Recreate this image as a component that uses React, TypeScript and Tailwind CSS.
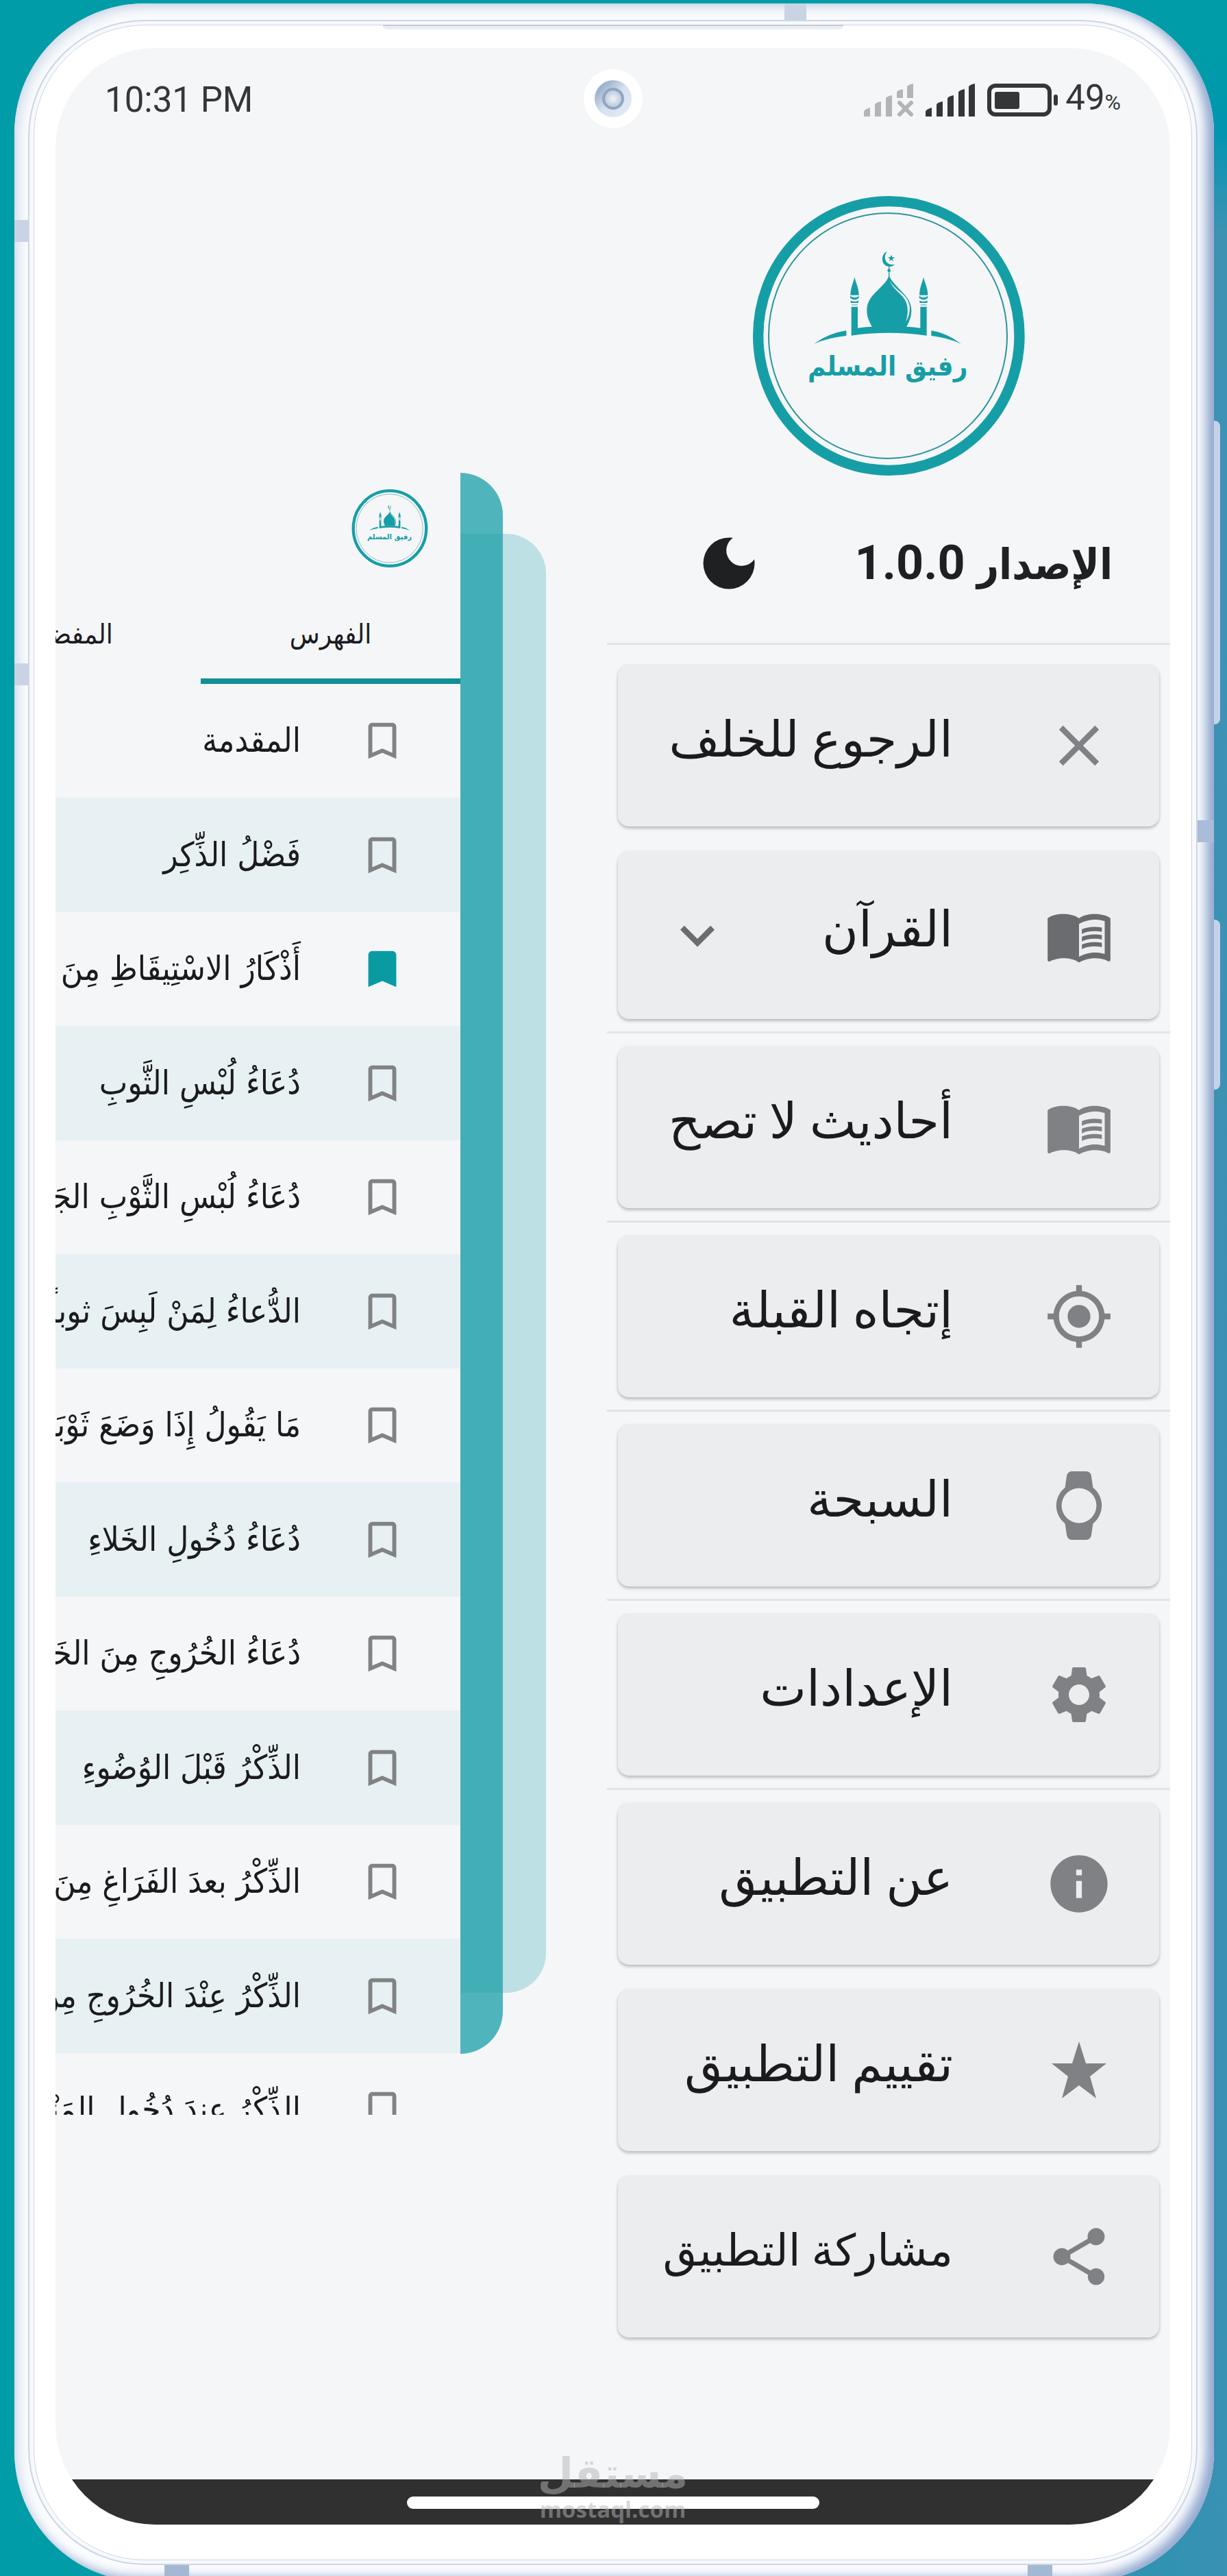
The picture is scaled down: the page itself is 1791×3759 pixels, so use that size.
import { useState } from "react";
import type { ComponentType } from "react";
import {
  MdBookmark,
  MdBookmarkBorder,
  MdClose,
  MdDarkMode,
  MdExpandMore,
  MdInfo,
  MdMenuBook,
  MdMyLocation,
  MdSettings,
  MdShare,
} from "react-icons/md";

type IconProps = { className?: string };

type MenuItem = {
  label: string;
  icon: ComponentType<IconProps>;
  divider?: boolean;
  expandable?: boolean;
  long?: boolean;
};

const MENU: MenuItem[] = [
  { label: "الرجوع للخلف", icon: MdClose },
  { label: "القرآن", icon: MdMenuBook, expandable: true, divider: true },
  { label: "أحاديث لا تصح", icon: MdMenuBook, divider: true },
  { label: "إتجاه القبلة", icon: MdMyLocation, divider: true },
  { label: "السبحة", icon: WatchIcon, divider: true },
  { label: "الإعدادات", icon: MdSettings, divider: true },
  { label: "عن التطبيق", icon: MdInfo },
  { label: "تقييم التطبيق", icon: StarIcon },
  { label: "مشاركة التطبيق", icon: MdShare, long: true },
];

const CHAPTERS = [
  "المقدمة",
  "فَضْلُ الذِّكِر",
  "أَذْكَارُ الاسْتِيقَاظِ مِنَ",
  "دُعَاءُ لُبْسِ الثَّوبِ",
  "دُعَاءُ لُبْسِ الثَّوْبِ الجَدِيدِ",
  "الدُّعاءُ لِمَنْ لَبِسَ ثوباً جديداً",
  "مَا يَقُولُ إِذَا وَضَعَ ثَوْبَهُ",
  "دُعَاءُ دُخُولِ الخَلاءِ",
  "دُعَاءُ الخُرُوجِ مِنَ الخَلاءِ",
  "الذِّكْرُ قَبْلَ الوُضُوءِ",
  "الذِّكْرُ بعدَ الفَرَاغِ مِنَ الوُضُوءِ",
  "الذِّكْرُ عِنْدَ الخُرُوجِ مِنَ المَنْزِلِ",
  "الذِّكْرُ عِندَ دُخُولِ المَنْزِلِ",
];

function WatchIcon({ className }: IconProps) {
  return (
    <svg viewBox="0 0 24 24" className={className} fill="currentColor" aria-hidden="true">
      <path
        fillRule="evenodd"
        d="M16.9 5.7 16.3 1.6Q16 0 14.5 0h-5Q8 0 7.7 1.6L7.1 5.7A8 8 0 0 0 7.1 18.3l.6 4.1Q8 24 9.5 24h5q1.5 0 1.8-1.6l.6-4.1A8 8 0 0 0 16.9 5.7ZM12 18.1a6.1 6.1 0 1 1 0-12.2 6.1 6.1 0 0 1 0 12.2Z"
      />
    </svg>
  );
}

function StarIcon({ className }: IconProps) {
  return (
    <svg viewBox="0 0 100 100" className={className} fill="currentColor" aria-hidden="true">
      <path d="M50 8 60 40H90L66 59 75 91 50 72 25 91 34 59 10 40H40Z" />
    </svg>
  );
}

function Minaret() {
  return (
    <g>
      <path d="M0 433C5 458 18 478 19 512H-18C-17 478-5 458 0 433Z" />
      <path d="M-19 516Q0 530 19 516V524Q0 540-19 524Z" />
      <path d="M-17 536Q0 544 17 536V546H-17Z" />
      <path d="M-13 552H14V557H-13Z" opacity="0.5" />
    </g>
  );
}

function Logo({ className }: IconProps) {
  return (
    <svg viewBox="118 78 1191 1224" className={className} fill="#169ea6" role="img" aria-label="رفيق المسلم">
      <ellipse cx="713" cy="690" rx="572" ry="589" fill="none" stroke="#169ea6" strokeWidth="46" />
      <ellipse cx="709" cy="690" rx="522" ry="537" fill="none" stroke="#2b959b" strokeWidth="6" />
      {/* crescent and star */}
      <path d="M706 321C677 330 676 384 714 387Q730 387 739 377C702 386 684 348 706 321Z" />
      <path d="M724 335 728 346 739 346 730 353 733 364 724 357 715 364 718 353 709 346 720 346Z" />
      <path d="M712 383H716V432H712Z" />
      <circle cx="714" cy="404" r="7" />
      {/* dome */}
      <path d="M714 426C698 480 617 506 617 578C617 612 630 630 640 652H790C800 630 812 612 812 578C812 512 738 482 714 426Z" />
      <path
        d="M717 450C734 494 788 512 794 562C798 592 793 610 788 628C802 606 807 582 804 560C797 508 742 492 717 450Z"
        fill="#f5f6f8"
      />
      <g transform="translate(563 0)">
        <Minaret />
      </g>
      <g transform="translate(865 0)">
        <Minaret />
      </g>
      <path d="M549 563H577V656Q604 652 640 650H790Q824 652 851 656V563H879V689Q713 665 549 689Z" />
      <path d="M385 725Q452 678 527 667V690Q450 698 385 725Z" />
      <path d="M1030 725Q966 678 899 667V690Q968 698 1030 725Z" />
      <text
        x="708"
        y="864"
        textAnchor="middle"
        direction="rtl"
        className="font-['DejaVu_Sans_Condensed','DejaVu_Sans',sans-serif] text-[120px] font-bold"
      >
        رفيق المسلم
      </text>
    </svg>
  );
}

function Signal({ off }: { off?: boolean }) {
  return (
    <svg
      viewBox="0 0 72 48"
      className={off ? "h-12 w-[72px] text-[#b4b4b5]" : "h-12 w-[72px] text-[#353637]"}
      fill="currentColor"
      aria-hidden="true"
    >
      <path d="M0 48V41Q0 38 9 35V48ZM16 48V31Q16 28 25 26V48ZM32 48V22Q32 19 41 17V48Z" />
      {off ? (
        <>
          <path d="M48 21V13Q48 10 57 8V21ZM63 21V5Q63 2 72 0V21Z" />
          <path d="M52 28 69 45M69 28 52 45" stroke="currentColor" strokeWidth="6" strokeLinecap="round" />
        </>
      ) : (
        <path d="M48 48V13Q48 10 57 8V48ZM63 48V5Q63 2 72 0V48Z" />
      )}
    </svg>
  );
}

function Battery() {
  return (
    <svg viewBox="0 0 104 48" className="h-12 w-[104px] text-[#353637]" fill="currentColor" aria-hidden="true">
      <rect x="3" y="3" width="88" height="42" rx="9" fill="none" stroke="currentColor" strokeWidth="6" />
      <rect x="11" y="12" width="36" height="25" rx="3" />
      <rect x="97" y="16" width="6" height="16" rx="3" />
    </svg>
  );
}

function StatusBar() {
  return (
    <header className="grid h-[148px] grid-cols-[1fr_auto_1fr] items-center px-[72px] text-[#353637]">
      <time className="pt-1 text-[51px] leading-[60px]">10:31 PM</time>
      <div className="grid size-[86px] place-items-center rounded-full bg-white">
        <div className="grid size-[54px] place-items-center rounded-full bg-linear-to-br from-[#7f97b8] via-[#d5e1ee] to-[#e4edf6]">
          <div className="size-8 rounded-full border-4 border-[#8fa5c3] bg-radial from-[#f1f4f9] to-[#a9bad2]" />
        </div>
      </div>
      <div className="flex items-center justify-end gap-[18px] pt-1">
        <Signal off />
        <Signal />
        <Battery />
        <p className="-ml-2 text-[51px] leading-[60px]">
          49<span className="text-[32px]">%</span>
        </p>
      </div>
    </header>
  );
}

function ChapterPanel() {
  const [saved, setSaved] = useState<number[]>([2]);
  const toggle = (i: number) => setSaved((s) => (s.includes(i) ? s.filter((n) => n !== i) : [...s, i]));

  return (
    <div className="mt-[472px] flex min-w-0 items-start">
      <section
        dir="rtl"
        className="h-[2396px] min-w-0 flex-1 overflow-hidden font-['DejaVu_Sans_Condensed','DejaVu_Sans',sans-serif]"
      >
        <div className="flex h-[158px] items-start pt-6 pr-[47px]">
          <Logo className="h-[114px] w-[112px]" />
        </div>
        <div role="tablist" className="flex h-[150px] text-[40px] text-[#1b1b1f]">
          <button
            role="tab"
            aria-selected="true"
            className="w-[379px] shrink-0 border-b-8 border-[#118f96] pt-3 text-center"
          >
            الفهرس
          </button>
          <button
            role="tab"
            aria-selected="false"
            className="w-[379px] shrink-0 border-b-8 border-transparent pt-3 text-center"
          >
            المفضلة
          </button>
        </div>
        <ul>
          {CHAPTERS.map((title, i) => (
            <li
              key={title}
              className="flex h-[166px] items-center gap-[84px] pr-[79px] even:h-[167px] even:bg-[#e7f0f2]"
            >
              <button aria-label={"حفظ " + title} onClick={() => toggle(i)} className="shrink-0 text-[#808284]">
                {saved.includes(i) ? (
                  <MdBookmark className="size-[70px] text-[#0a9ba2]" />
                ) : (
                  <MdBookmarkBorder className="size-[70px]" />
                )}
              </button>
              <a href="#chapter" className="text-[49px] leading-[80px] whitespace-nowrap text-[#1b1b1d]">
                {title}
              </a>
            </li>
          ))}
        </ul>
      </section>
      {/* stacked page edges */}
      <div className="h-[2307px] w-[62px] shrink-0 rounded-r-[62px] bg-[#50b4bd]" />
      <div className="my-[89px] -ml-[62px] h-[2129px] w-[125px] shrink-0 rounded-r-[58px] bg-[#19a0a9]/25" />
    </div>
  );
}

function Drawer() {
  return (
    <aside dir="rtl" className="min-w-0 pt-[68px]">
      <Logo className="mx-auto h-[408px] w-[397px]" />
      <div className="flex h-[244px] items-center justify-between pt-3 pr-[84px] pl-[128px] text-[#1f2022]">
        <h1 className="text-[70px] leading-[90px] font-bold whitespace-nowrap">
          <span className="font-['DejaVu_Sans_Condensed','DejaVu_Sans',sans-serif] text-[62px]">الإصدار</span> 1.0.0
        </h1>
        <button aria-label="الوضع الليلي">
          <MdDarkMode className="size-[100px]" />
        </button>
      </div>
      <div className="h-[3px] bg-[#e3e4e6]" />
      <nav className="pt-[29px]">
        {MENU.map(({ label, icon: Icon, divider, expandable, long }) => (
          <div key={label}>
            <div className="px-4">
              <button
                className={
                  "flex w-full items-center rounded-[16px] bg-[#ecedef] pr-[67px] pl-[66px] shadow-[0_3px_4px_rgba(0,0,0,0.22),0_0_4px_rgba(0,0,0,0.06)] " +
                  (expandable ? "h-[245px] text-[#6b6c6f]" : "h-[236px] text-[#808184]")
                }
              >
                <Icon className="size-[100px] shrink-0" />
                <span
                  className={
                    "mr-[134px] flex-1 pb-4 text-right leading-[100px] whitespace-nowrap text-[#1b1b1d] " +
                    (long ? "text-[64px]" : "text-[72px]")
                  }
                >
                  {label}
                </span>
                {expandable && <MdExpandMore className="size-[100px] shrink-0" />}
              </button>
            </div>
            {divider ? <div className="mt-[18px] mb-[19px] h-[3px] bg-[#e3e4e6]" /> : <div className="h-9" />}
          </div>
        ))}
      </nav>
    </aside>
  );
}

export default function App() {
  return (
    <div className="min-h-screen overflow-hidden bg-[linear-gradient(to_right,#009ca8_60%,transparent),linear-gradient(#009ca8_2%,#0095b0_5%,#3f92b3_9%,#3991b3)] pt-[5px] pr-[19px] pl-[21px] font-[Roboto,'Noto_Sans','DejaVu_Sans',sans-serif]">
      <div className="relative -mb-[9px] rounded-[190px] bg-[#fbfcfe] pt-6 pr-6 pb-6 pl-5 shadow-[inset_-12px_-6px_16px_#93a9cf,inset_6px_6px_18px_#d3ddea]">
        {/* antenna bands and side keys */}
        <i className="absolute top-0 left-[1124px] h-6 w-8 bg-[#c9d3e3]" />
        <i className="absolute top-[316px] left-0 h-8 w-5 bg-[#c9d3e3]" />
        <i className="absolute top-[963px] left-0 h-8 w-5 bg-[#c9d3e3]" />
        <i className="absolute top-[1192px] right-0 h-8 w-6 bg-[#a9bcd9]" />
        <i className="absolute bottom-0 left-[219px] h-6 w-9 bg-[#a4b8d4]" />
        <i className="absolute right-[236px] bottom-0 h-6 w-9 bg-[#a4b8d4]" />
        <i className="absolute top-[609px] -right-[9px] h-[443px] w-[9px] rounded-r-lg bg-[#c3d2e8]" />
        <i className="absolute top-[1337px] -right-[9px] h-[248px] w-[9px] rounded-r-lg bg-[#c3d2e8]" />

        <div className="rounded-[170px] border-2 border-[#ccd6e4] bg-[#f7f9fc] px-[6px] py-[5px]">
          <div className="relative rounded-[162px] border border-[#ccd6e4] bg-white px-[31px] pt-[33px] pb-[51px]">
            {/* earpiece */}
            <i className="absolute -top-px left-1/2 h-[7px] w-[672px] -translate-x-1/2 rounded-b-md border-t-2 border-[#c5c9d6] bg-[#eceef5]" />
            <main className="relative overflow-hidden rounded-[146px] bg-[#f5f6f8]">
              <StatusBar />
              <div className="grid grid-cols-[716fr_822fr] gap-[89px] pb-[171px]">
                <ChapterPanel />
                <Drawer />
              </div>
              <footer className="flex h-[66px] justify-center bg-[#303030] pt-[25px]">
                <div className="h-[18px] w-[602px] rounded-full bg-white" />
              </footer>
              {/* watermark */}
              <div className="absolute bottom-0 left-1/2 -translate-x-1/2 text-center font-bold text-[#b4b4b4]/50">
                <p className="text-[60px] leading-[60px]">مستقل</p>
                <p className="font-['Open_Sans',sans-serif] text-[33px] leading-[44px]">mostaql.com</p>
              </div>
            </main>
          </div>
        </div>
      </div>
    </div>
  );
}
